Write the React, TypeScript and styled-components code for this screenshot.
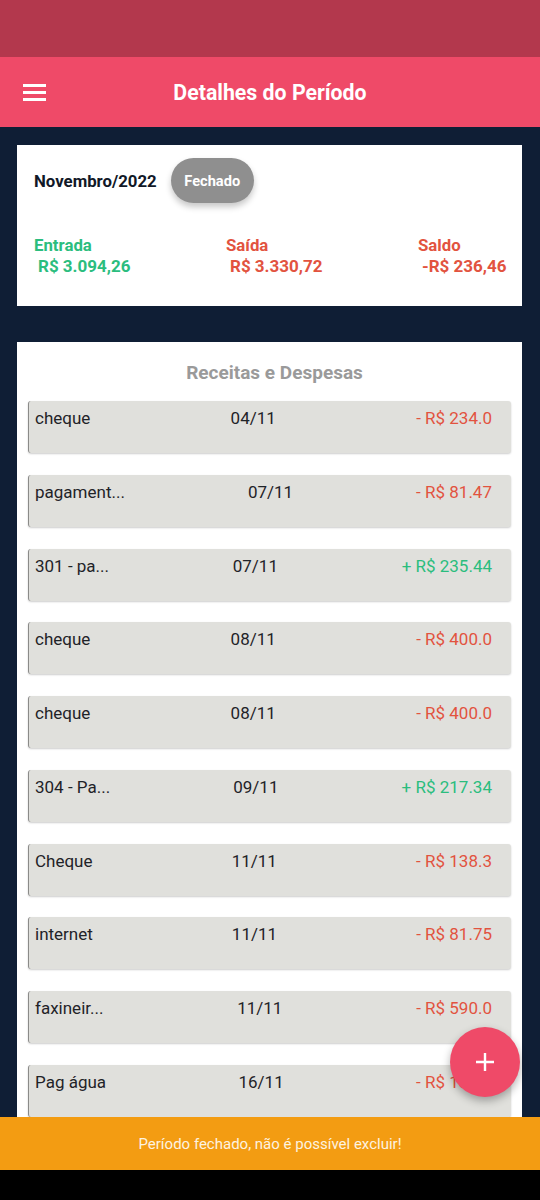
import React from "react";
import styled, { createGlobalStyle } from "styled-components";

const Global = createGlobalStyle`
  html, body { margin: 0; padding: 0; }
  body { font-family: Roboto, "Noto Sans", sans-serif; background: #0f1e35; }
  * { box-sizing: border-box; }
`;

const Screen = styled.div`
  position: relative;
  width: 540px;
  height: 1200px;
  display: flex;
  flex-direction: column;
  background: #0f1e35;
  overflow: hidden;
`;

const StatusBar = styled.div`
  height: 57px;
  background: #b3384d;
  flex: none;
`;

const Header = styled.header`
  height: 70px;
  flex: none;
  background: #ef4a68;
  display: flex;
  align-items: center;
  position: relative;
  padding-left: 23px;
`;

const MenuButton = styled.div`
  width: 23px;
  display: flex;
  flex-direction: column;
  gap: 4px;
  span {
    display: block;
    height: 3px;
    background: #fff;
  }
`;

const Title = styled.h1`
  flex: 1;
  margin: 0;
  padding-right: 46px;
  text-align: center;
  color: #fff;
  font-size: 21.3px;
  font-weight: 700;
`;

const Main = styled.main`
  flex: 1;
  min-height: 0;
  display: flex;
  flex-direction: column;
  gap: 36px;
  padding: 18px 18px 0 17px;
`;

const SummaryCard = styled.section`
  background: #fff;
  height: 161px;
  flex: none;
  padding: 13px 0 0 17px;
`;

const PeriodRow = styled.div`
  display: flex;
  align-items: center;
  gap: 14px;
`;

const PeriodName = styled.span`
  font-size: 16.8px;
  font-weight: 700;
  color: #111827;
`;

const StatusPill = styled.span`
  width: 83px;
  height: 45px;
  border-radius: 23px;
  background: #8f8f8f;
  color: #fff;
  font-size: 14.6px;
  font-weight: 700;
  display: flex;
  align-items: center;
  justify-content: center;
  box-shadow: 0 4px 6px rgba(0, 0, 0, 0.22);
`;

const Totals = styled.div`
  display: grid;
  grid-template-columns: 192px 192px 1fr;
  margin-top: 32px;
`;

const Total = styled.div<{ $color: string }>`
  display: flex;
  flex-direction: column;
  color: ${(p) => p.$color};
  font-weight: 700;
  font-size: 16.8px;
  line-height: 21px;
  white-space: nowrap;
  span + span {
    padding-left: 4px;
    font-size: 17px;
  }
`;

const ListCard = styled.section`
  flex: 1;
  min-height: 0;
  background: #fff;
  padding: 0 11px;
  display: flex;
  flex-direction: column;
`;

const ListTitle = styled.h2`
  margin: 0;
  height: 59px;
  padding: 19px 0 0 10px;
  text-align: center;
  font-size: 19px;
  font-weight: 700;
  color: #9a9a9a;
  flex: none;
`;

const Rows = styled.div`
  display: flex;
  flex-direction: column;
  gap: 21.75px;
`;

const Row = styled.div`
  height: 52px;
  flex: none;
  background: #e0e0dc;
  border-left: 1px solid #8a8a88;
  border-radius: 3px;
  box-shadow: 0 1px 2px rgba(0, 0, 0, 0.2);
  display: flex;
  justify-content: space-between;
  padding: 5px 19px 0 6px;
  font-size: 17px;
  line-height: 24px;
  color: #1f2328;
`;

const Amount = styled.span<{ $in: boolean }>`
  color: ${(p) => (p.$in ? "#2bbd7e" : "#e2533f")};
`;

const Snackbar = styled.div`
  position: absolute;
  left: 0;
  right: 0;
  bottom: 30px;
  height: 53px;
  background: #f39c12;
  color: #fdf3e0;
  font-size: 15px;
  display: flex;
  align-items: center;
  justify-content: center;
`;

const NavBar = styled.div`
  height: 30px;
  flex: none;
  background: #000;
  position: relative;
  z-index: 2;
`;

const Fab = styled.div`
  position: absolute;
  left: 450px;
  top: 1027px;
  width: 70px;
  height: 70px;
  border-radius: 50%;
  background: #ef4a68;
  box-shadow: 0 4px 8px rgba(0, 0, 0, 0.3);
  display: flex;
  align-items: center;
  justify-content: center;
`;

const items = [
  { name: "cheque", date: "04/11", amount: "- R$ 234.0", in: false },
  { name: "pagament...", date: "07/11", amount: "- R$ 81.47", in: false },
  { name: "301 - pa...", date: "07/11", amount: "+ R$ 235.44", in: true },
  { name: "cheque", date: "08/11", amount: "- R$ 400.0", in: false },
  { name: "cheque", date: "08/11", amount: "- R$ 400.0", in: false },
  { name: "304 - Pa...", date: "09/11", amount: "+ R$ 217.34", in: true },
  { name: "Cheque", date: "11/11", amount: "- R$ 138.3", in: false },
  { name: "internet", date: "11/11", amount: "- R$ 81.75", in: false },
  { name: "faxineir...", date: "11/11", amount: "- R$ 590.0", in: false },
  { name: "Pag água", date: "16/11", amount: "- R$ 135.0", in: false },
];

export default function App() {
  return (
    <Screen>
      <Global />
      <StatusBar />
      <Header>
        <MenuButton>
          <span />
          <span />
          <span />
        </MenuButton>
        <Title>Detalhes do Período</Title>
      </Header>
      <Main>
        <SummaryCard>
          <PeriodRow>
            <PeriodName>Novembro/2022</PeriodName>
            <StatusPill>Fechado</StatusPill>
          </PeriodRow>
          <Totals>
            <Total $color="#2bbd7e">
              <span>Entrada</span>
              <span>R$ 3.094,26</span>
            </Total>
            <Total $color="#e2533f">
              <span>Saída</span>
              <span>R$ 3.330,72</span>
            </Total>
            <Total $color="#e2533f">
              <span>Saldo</span>
              <span>-R$ 236,46</span>
            </Total>
          </Totals>
        </SummaryCard>
        <ListCard>
          <ListTitle>Receitas e Despesas</ListTitle>
          <Rows>
            {items.map((it, i) => (
              <Row key={i}>
                <span>{it.name}</span>
                <span>{it.date}</span>
                <Amount $in={it.in}>{it.amount}</Amount>
              </Row>
            ))}
          </Rows>
        </ListCard>
      </Main>
      <NavBar />
      <Snackbar>Período fechado, não é possível excluir!</Snackbar>
      <Fab>
        <svg width="22" height="22" viewBox="0 0 22 22">
          <path d="M11 2v18M2 11h18" stroke="#fff" strokeWidth="2.4" />
        </svg>
      </Fab>
    </Screen>
  );
}
